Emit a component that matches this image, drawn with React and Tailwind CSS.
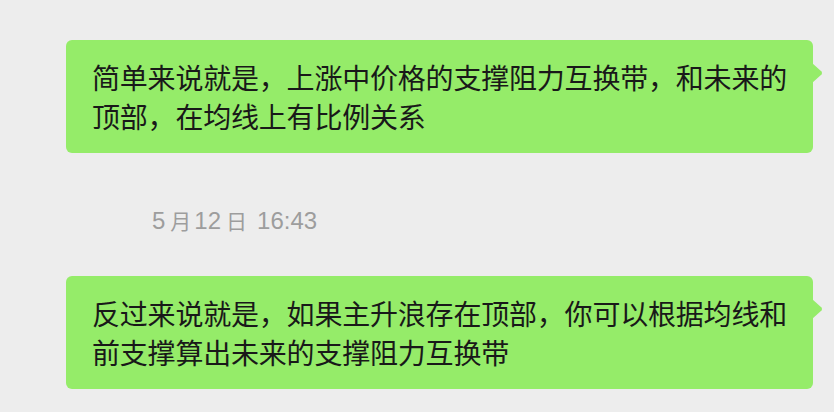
import React from "react";

const cjk = { fontFamily: '"Noto Sans CJK SC", "Noto Sans", sans-serif' };

function Tail({ top }) {
  return (
    <svg
      className="absolute right-[-10px]"
      style={{ top }}
      width="11"
      height="20"
      viewBox="0 0 11 20"
    >
      <path d="M0 0 L9.5 8.6 Q10.6 10 9.5 11.4 L0 20 Z" fill="#95ec69" />
    </svg>
  );
}

function Bubble({ lines }) {
  return (
    <div className="relative ml-[66px] w-[747px] h-[113px] rounded-[6px] bg-[#95ec69] pl-[26px] pt-[18px]">
      <Tail top={23} />
      <div
        className="text-[28px] leading-[39px] text-[#191919] whitespace-nowrap tracking-[-0.2px]"
        style={cjk}
      >
        {lines.map((l, i) => (
          <div key={i}>{l}</div>
        ))}
      </div>
    </div>
  );
}

function Timestamp() {
  return (
    <div
      className="ml-[152px] mt-[53px] h-[30px] flex items-center text-[24px] leading-[30px] text-[#9d9d9d] whitespace-nowrap"
      style={{ fontFamily: '"Liberation Sans", "Noto Sans CJK SC", sans-serif' }}
    >
      <span>5</span>
      <span className="ml-[5px] text-[21px] -translate-y-[1.5px]" style={cjk}>月</span>
      <span className="ml-[3px]">12</span>
      <span className="ml-[5px] text-[21px] -translate-y-[1.5px]" style={cjk}>日</span>
      <span className="ml-[10px]">16:43</span>
    </div>
  );
}

export default function App() {
  return (
    <div className="w-[834px] h-[412px] bg-[#ededed] overflow-hidden flex flex-col pt-[40px]">
      <Bubble
        lines={[
          "简单来说就是，上涨中价格的支撑阻力互换带，和未来的",
          "顶部，在均线上有比例关系",
        ]}
      />
      <Timestamp />
      <div className="mt-[40px]">
        <Bubble
          lines={[
            "反过来说就是，如果主升浪存在顶部，你可以根据均线和",
            "前支撑算出未来的支撑阻力互换带",
          ]}
        />
      </div>
    </div>
  );
}
